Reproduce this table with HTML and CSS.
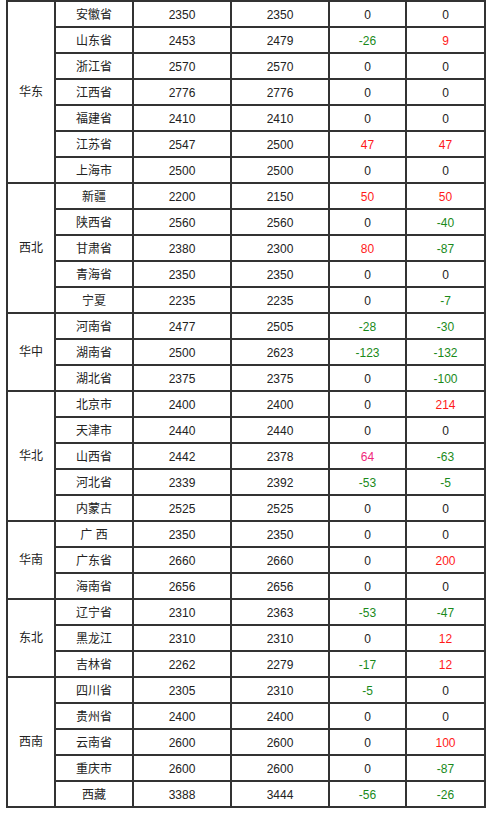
FILE: index.html
```html
<!DOCTYPE html>
<html lang="zh">
<head>
<meta charset="utf-8">
<link rel="stylesheet" href="styles.css">
</head>
<body>
<table class="price-table">
<colgroup>
<col class="c-region"><col class="c-prov"><col class="c-num"><col class="c-num"><col class="c-diff"><col class="c-diff2">
</colgroup>
<tbody>
<tr><td rowspan="7" class="region">华东</td><td>安徽省</td><td>2350</td><td>2350</td><td>0</td><td>0</td></tr>
<tr><td>山东省</td><td>2453</td><td>2479</td><td class="down">-26</td><td class="up">9</td></tr>
<tr><td>浙江省</td><td>2570</td><td>2570</td><td>0</td><td>0</td></tr>
<tr><td>江西省</td><td>2776</td><td>2776</td><td>0</td><td>0</td></tr>
<tr><td>福建省</td><td>2410</td><td>2410</td><td>0</td><td>0</td></tr>
<tr><td>江苏省</td><td>2547</td><td>2500</td><td class="up">47</td><td class="up">47</td></tr>
<tr><td>上海市</td><td>2500</td><td>2500</td><td>0</td><td>0</td></tr>

<tr><td rowspan="5" class="region">西北</td><td>新疆</td><td>2200</td><td>2150</td><td class="up">50</td><td class="up">50</td></tr>
<tr><td>陕西省</td><td>2560</td><td>2560</td><td>0</td><td class="down">-40</td></tr>
<tr><td>甘肃省</td><td>2380</td><td>2300</td><td class="up">80</td><td class="down">-87</td></tr>
<tr><td>青海省</td><td>2350</td><td>2350</td><td>0</td><td>0</td></tr>
<tr><td>宁夏</td><td>2235</td><td>2235</td><td>0</td><td class="down">-7</td></tr>

<tr><td rowspan="3" class="region">华中</td><td>河南省</td><td>2477</td><td>2505</td><td class="down">-28</td><td class="down">-30</td></tr>
<tr><td>湖南省</td><td>2500</td><td>2623</td><td class="down">-123</td><td class="down">-132</td></tr>
<tr><td>湖北省</td><td>2375</td><td>2375</td><td>0</td><td class="down">-100</td></tr>

<tr><td rowspan="5" class="region">华北</td><td>北京市</td><td>2400</td><td>2400</td><td>0</td><td class="up">214</td></tr>
<tr><td>天津市</td><td>2440</td><td>2440</td><td>0</td><td>0</td></tr>
<tr><td>山西省</td><td>2442</td><td>2378</td><td class="up pink">64</td><td class="down">-63</td></tr>
<tr><td>河北省</td><td>2339</td><td>2392</td><td class="down">-53</td><td class="down">-5</td></tr>
<tr><td>内蒙古</td><td>2525</td><td>2525</td><td>0</td><td>0</td></tr>

<tr><td rowspan="3" class="region">华南</td><td>广 西</td><td>2350</td><td>2350</td><td>0</td><td>0</td></tr>
<tr><td>广东省</td><td>2660</td><td>2660</td><td>0</td><td class="up">200</td></tr>
<tr><td>海南省</td><td>2656</td><td>2656</td><td>0</td><td>0</td></tr>

<tr><td rowspan="3" class="region">东北</td><td>辽宁省</td><td>2310</td><td>2363</td><td class="down">-53</td><td class="down">-47</td></tr>
<tr><td>黑龙江</td><td>2310</td><td>2310</td><td>0</td><td class="up">12</td></tr>
<tr><td>吉林省</td><td>2262</td><td>2279</td><td class="down">-17</td><td class="up">12</td></tr>

<tr><td rowspan="5" class="region">西南</td><td>四川省</td><td>2305</td><td>2310</td><td class="down">-5</td><td>0</td></tr>
<tr><td>贵州省</td><td>2400</td><td>2400</td><td>0</td><td>0</td></tr>
<tr><td>云南省</td><td>2600</td><td>2600</td><td>0</td><td class="up">100</td></tr>
<tr><td>重庆市</td><td>2600</td><td>2600</td><td>0</td><td class="down">-87</td></tr>
<tr><td>西藏</td><td>3388</td><td>3444</td><td class="down">-56</td><td class="down">-26</td></tr>
</tbody>
</table>
</body>
</html>
```
FILE: styles.css
```css
html, body {
  margin: 0;
  padding: 0;
  background: #ffffff;
}
body {
  font-family: "Liberation Sans", "Noto Sans CJK SC", sans-serif;
  font-size: 12px;
  color: #222222;
}
.price-table {
  border-collapse: collapse;
  table-layout: fixed;
  width: 480px;
  margin-left: 6px;
}
.c-region { width: 48px; }
.c-prov { width: 78px; }
.c-num { width: 98px; }
.c-diff { width: 77px; }
.c-diff2 { width: 79px; }
.price-table td {
  border: 2px solid #333333;
  height: 26px;
  padding: 0;
  text-align: center;
  vertical-align: middle;
  line-height: 16px;
  padding-top: 1px;
  box-sizing: border-box;
}
.price-table td.region {
  padding-top: 0;
}
.up { color: #ff1a1a; }
.pink { color: #f0287a; }
.down { color: #1a8a1a; }
```
